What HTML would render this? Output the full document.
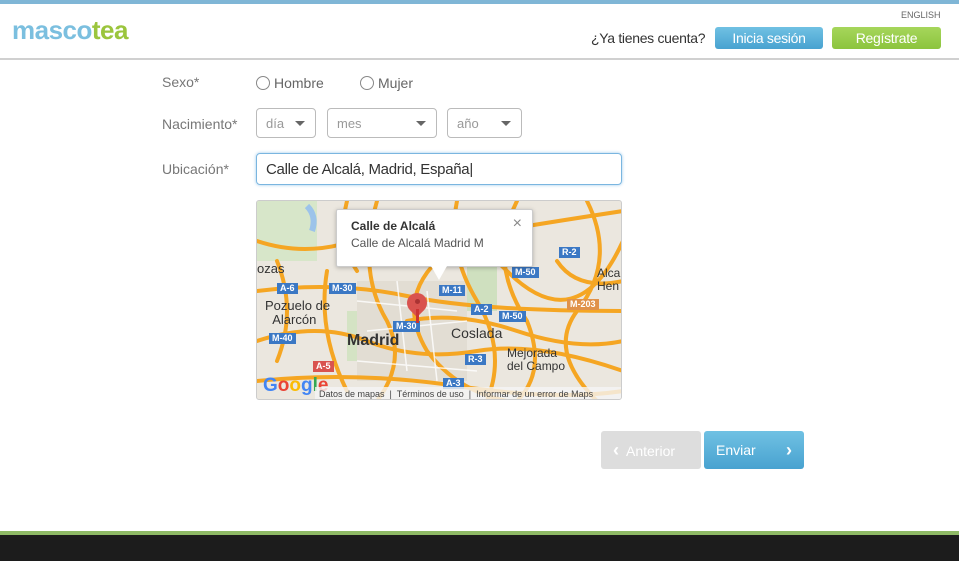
<!DOCTYPE html>
<html><head><meta charset="utf-8"><style>
*{margin:0;padding:0;box-sizing:border-box}
body{width:959px;height:561px;overflow:hidden;background:#fff;font-family:"Liberation Sans",sans-serif;position:relative;color:#555}
.abs{position:absolute}
.lbl{font-size:14px;color:#777}
.sel{position:absolute;top:108px;height:30px;border:1px solid #bbb;border-radius:4px;font-size:13px;color:#999;padding:7px 9px}
.sel:after{content:"";position:absolute;right:10px;top:12px;border:5px solid transparent;border-top:5px solid #666;border-bottom:0}
.radio{display:inline-block;width:14px;height:14px;border:1px solid #888;border-radius:50%;vertical-align:-2px;margin-right:4px}
.sh{position:absolute;background:#3b78c4;color:#fff;font-size:9px;font-weight:bold;padding:0 3px;height:11px;line-height:11px}
</style></head><body>
<div class="abs" style="left:0;top:0;width:959px;height:4px;background:#7fb6d6"></div>
<div class="abs" style="left:12px;top:15px;font-size:26px;font-weight:bold;letter-spacing:-0.5px;color:#7bbfdf">masco<span style="color:#9bc53d">tea</span></div>
<div class="abs" style="left:901px;top:10px;font-size:9px;color:#666">ENGLISH</div>
<div class="abs" style="left:591px;top:30px;font-size:14px;color:#333;letter-spacing:-0.3px">¿Ya tienes cuenta?</div>
<div class="abs" style="left:715px;top:27px;width:108px;height:22px;border-radius:3px;background:linear-gradient(#70c1e3,#48a2d0);color:#fff;font-size:14px;text-align:center;line-height:22px;letter-spacing:-0.3px">Inicia sesión</div>
<div class="abs" style="left:832px;top:27px;width:109px;height:22px;border-radius:3px;background:linear-gradient(#a6d65b,#8cc43e);color:#fff;font-size:14px;text-align:center;line-height:22px;letter-spacing:-0.3px">Regístrate</div>
<div class="abs" style="left:0;top:58px;width:959px;height:2px;background:#d0d0d0"></div>

<div class="abs lbl" style="left:162px;top:74px">Sexo*</div>
<div class="abs lbl" style="left:256px;top:75px;color:#666"><span class="radio"></span>Hombre</div>
<div class="abs lbl" style="left:360px;top:75px;color:#666"><span class="radio"></span>Mujer</div>
<div class="abs lbl" style="left:162px;top:116px">Nacimiento*</div>
<div class="sel" style="left:256px;width:60px">día</div>
<div class="sel" style="left:327px;width:110px">mes</div>
<div class="sel" style="left:447px;width:75px">año</div>
<div class="abs lbl" style="left:162px;top:161px">Ubicación*</div>
<div class="abs" style="left:256px;top:153px;width:366px;height:32px;border:1px solid #7ab6e0;border-radius:4px;font-size:15px;color:#333;padding:7px 9px;box-shadow:0 0 3px #9cc8ea;letter-spacing:-0.3px">Calle de Alcalá, Madrid, España|</div>

<div class="abs" style="left:256px;top:200px;width:366px;height:200px;border:1px solid #ccc;border-radius:3px;overflow:hidden;background:#ebe7df">
<svg width="366" height="200" style="position:absolute;left:0;top:0">
<rect x="0" y="0" width="60" height="60" fill="#d7e6c9"/>
<path d="M50 5 q10 10 5 25" stroke="#9cc3ea" stroke-width="6" fill="none"/>
<rect x="90" y="110" width="40" height="50" fill="#d4e3c4"/>
<rect x="210" y="60" width="30" height="50" fill="#cfe0bf"/>
<rect x="100" y="80" width="110" height="100" fill="#e2ddd3"/>
<g stroke="#f5a623" stroke-width="4" fill="none" stroke-linecap="round">
<path d="M0 40 Q60 60 120 30 T250 70 T366 40"/>
<path d="M0 90 Q80 80 150 95 T366 110"/>
<path d="M0 140 Q60 120 110 140 T220 150 T366 170"/>
<path d="M180 60 Q140 100 170 150 Q200 190 250 200"/>
<path d="M120 0 Q100 70 130 120 Q150 160 120 200"/>
<path d="M260 0 Q230 60 270 120 Q290 170 260 200"/>
<path d="M330 0 Q360 60 320 110 Q290 150 340 200"/>
<path d="M200 0 Q190 50 220 100 T230 200"/>
<path d="M20 60 Q40 110 20 160"/>
<path d="M70 70 Q60 130 90 190"/>
<path d="M150 120 Q200 110 260 130 T366 140"/>
<path d="M240 30 Q300 20 366 10"/>
<path d="M0 180 Q100 170 200 185 T366 190"/>
<path d="M90 0 Q80 40 100 70"/>
<path d="M300 60 Q320 90 366 80"/>
</g>
<g stroke="#fff" stroke-width="1.5" fill="none" opacity=".8">
<path d="M100 100 L200 110 M110 130 L210 120 M140 80 L150 170 M170 90 L180 180 M100 160 L220 170"/>
</g>
</svg>
<div class="sh" style="left:20px;top:82px">A-6</div>
<div class="sh" style="left:72px;top:82px">M-30</div>
<div class="sh" style="left:182px;top:84px">M-11</div>
<div class="sh" style="left:255px;top:66px">M-50</div>
<div class="sh" style="left:302px;top:46px">R-2</div>
<div class="sh" style="left:214px;top:103px">A-2</div>
<div class="sh" style="left:242px;top:110px">M-50</div>
<div class="sh" style="left:136px;top:120px">M-30</div>
<div class="sh" style="left:12px;top:132px">M-40</div>
<div class="sh" style="left:208px;top:153px">R-3</div>
<div class="sh" style="left:56px;top:160px;background:#d9534f">A-5</div>
<div class="sh" style="left:310px;top:98px;background:#e0924a">M-203</div>
<div class="sh" style="left:186px;top:177px">A-3</div>
<div class="abs" style="left:0;top:60px;font-size:13px;color:#333">ozas</div>
<div class="abs" style="left:8px;top:98px;font-size:13px;color:#333;line-height:14px">Pozuelo de<br>&nbsp;&nbsp;Alarcón</div>
<div class="abs" style="left:90px;top:131px;font-size:16px;font-weight:bold;color:#333">Madrid</div>
<div class="abs" style="left:194px;top:124px;font-size:14px;color:#333">Coslada</div>
<div class="abs" style="left:250px;top:146px;font-size:12px;color:#333;line-height:13px">Mejorada<br>del Campo</div>
<div class="abs" style="left:340px;top:66px;font-size:12px;color:#333;line-height:13px">Alca<br>Hen</div>
<div class="abs" style="left:150px;top:92px;width:20px;height:20px;border-radius:50% 50% 50% 0;transform:rotate(-45deg);background:#d9534f"></div>
<div class="abs" style="left:158px;top:98px;width:5px;height:5px;border-radius:50%;background:#a33"></div>
<div class="abs" style="left:159px;top:108px;width:3px;height:14px;background:#c33"></div>
<div class="abs" style="left:79px;top:8px;width:197px;height:58px;background:#fff;border:1px solid #ccc;border-radius:2px;box-shadow:0 1px 4px rgba(0,0,0,.25);padding:9px 14px;font-size:12px;color:#333">
<div style="font-weight:bold">Calle de Alcalá</div><div style="margin-top:3px;color:#555">Calle de Alcalá Madrid M</div>
<div class="abs" style="right:10px;top:5px;font-size:16px;color:#888">×</div></div>
<div class="abs" style="left:174px;top:65px;border:8px solid transparent;border-top:14px solid #fff"></div>
<div class="abs" style="left:6px;top:174px;font-size:19px;font-weight:bold"><span style="color:#4285f4">G</span><span style="color:#ea4335">o</span><span style="color:#fbbc05">o</span><span style="color:#4285f4">g</span><span style="color:#34a853">l</span><span style="color:#ea4335">e</span></div>
<div class="abs" style="left:58px;top:186px;width:308px;height:14px;background:rgba(245,245,245,.8);font-size:9px;color:#444;line-height:14px;padding-left:4px">Datos de mapas &nbsp;|&nbsp; Términos de uso &nbsp;|&nbsp; Informar de un error de Maps</div>
</div>

<div class="abs" style="left:601px;top:431px;width:100px;height:38px;background:#ddd;border-radius:3px;color:#fff;font-size:14px;line-height:38px;padding-left:12px"><b style="font-size:18px">&lsaquo;</b>&nbsp; Anterior</div>
<div class="abs" style="left:704px;top:431px;width:100px;height:38px;background:linear-gradient(#70c1e3,#48a2d0);border-radius:3px;color:#fff;font-size:14px;line-height:38px;padding-left:12px">Enviar<span style="position:absolute;right:12px;font-weight:bold;font-size:18px">›</span></div>

<div class="abs" style="left:0;top:531px;width:959px;height:4px;background:#8fba66"></div>
<div class="abs" style="left:0;top:535px;width:959px;height:26px;background:#1c1c1c"></div>
</body></html>
